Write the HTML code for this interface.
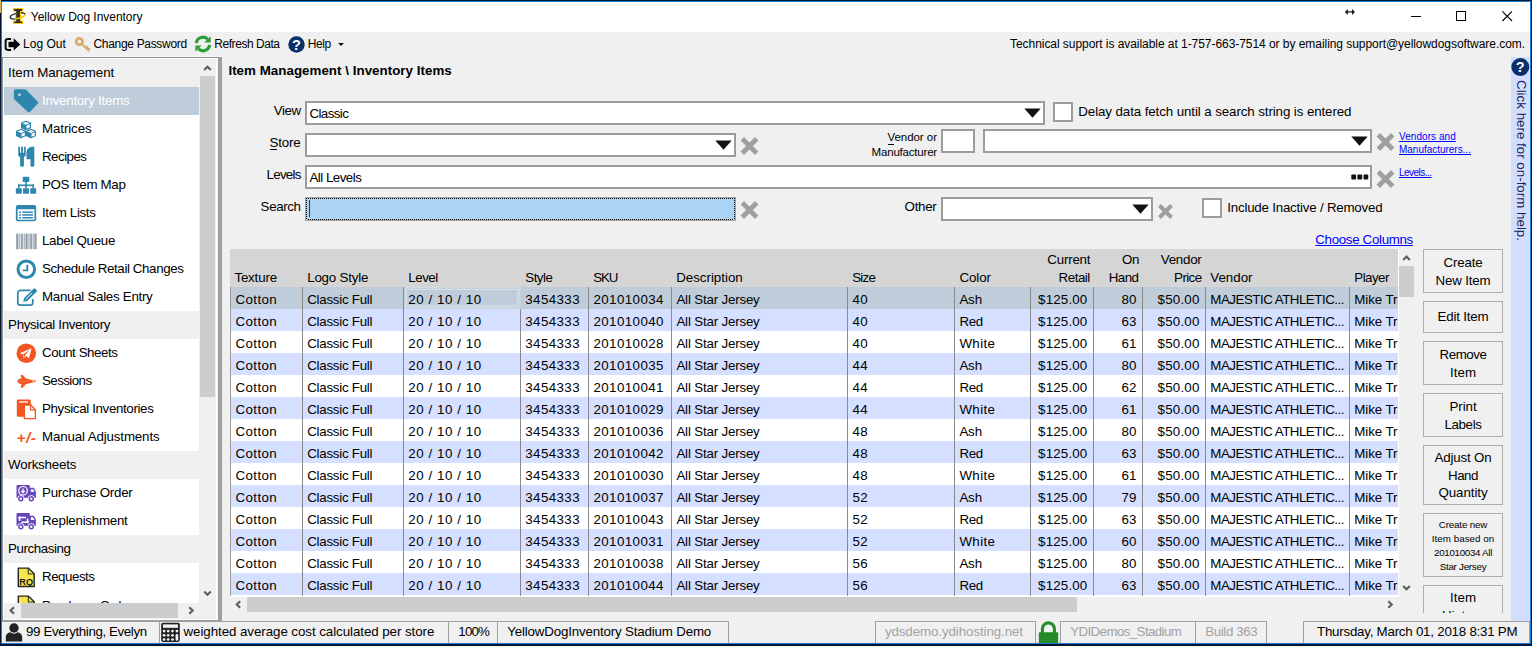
<!DOCTYPE html>
<html lang="en"><head><meta charset="utf-8"><title>Yellow Dog Inventory</title>
<style>
html,body{margin:0;padding:0;}
body{width:1532px;height:646px;position:relative;overflow:hidden;background:#03122e;font-family:"Liberation Sans",sans-serif;}
.b{position:absolute;box-sizing:content-box;display:block;}
.t{position:absolute;white-space:pre;line-height:1;font-family:"Liberation Sans",sans-serif;}
</style></head><body>
<div class="b" style="left:0px;top:0px;width:1532px;height:646px;background:#03122e;"></div>
<div class="b" style="left:1px;top:1px;width:1530px;height:643px;background:#1a84d8;"></div>
<div class="b" style="left:0px;top:0px;width:1px;height:13px;background:#d9b45a;"></div>
<div class="b" style="left:2px;top:2px;width:1528px;height:641px;background:#f0f0f0;"></div>
<div class="b" style="left:2px;top:2px;width:1528px;height:30px;background:#fff;"></div>
<span class="t" id="t0" style="top:10.94px;font-size:12px;color:#000;left:30.80px;letter-spacing:-0.035px;">Yellow Dog Inventory</span>
<svg class="b" style="left:7px;top:7px" width="20" height="18" viewBox="7 7 20 18">
<path d="M13 8h10.200v3.400h-2.200v9.300h2.200v3.200H13v-3.200h2.200v-9.300H13z" fill="#f7c600"/>
<path d="M14.200 9.100H22v1.800h-2v10.500h2v1.500h-7.800v-1.500h2V10.900h-2z" fill="#333"/>
<path d="M15.800 13.700c-3.600.9-5.900 2.300-5.600 3.700.2 1.300 2.600 1.800 5.300 1.500" fill="none" stroke="#2a2a2a" stroke-width="1.300"/>
<path d="M15 18.900c4.500-.5 9.300-2.200 10.300-4.500" fill="none" stroke="#f7c600" stroke-width="1.400"/>
<path d="M21 12.600c2.300.2 3.900.9 4.300 1.700" fill="none" stroke="#2a2a2a" stroke-width="1.200"/>
<circle cx="22.300" cy="12.700" r="0.700" fill="#2a2a2a"/>
</svg>
<svg class="b" style="left:1340px;top:4px" width="190" height="24" viewBox="0 0 190 24">
<g stroke="#000" stroke-width="1" fill="none" shape-rendering="crispEdges">
<path d="M71 12.500h10"/>
<rect x="116.500" y="7.500" width="9" height="9"/>
</g>
<path d="M162.400 7.400l9.600 9.600M172 7.400l-9.600 9.600" stroke="#000" stroke-width="1.100" fill="none"/>
<path d="M4.800 7.900L7.800 4.900v2.300h4.200V4.900l3 3-3 3V8.600H7.800v2.300z" fill="#1c1c1c"/>
</svg>
<span class="t" id="t1" style="top:38.14px;font-size:12px;color:#000;left:23.00px;letter-spacing:0.014px;">Log Out</span>
<span class="t" id="t2" style="top:38.14px;font-size:12px;color:#000;left:93.50px;letter-spacing:-0.318px;">Change Password</span>
<span class="t" id="t3" style="top:38.14px;font-size:12px;color:#000;left:214.30px;letter-spacing:-0.450px;">Refresh Data</span>
<span class="t" id="t4" style="top:38.14px;font-size:12px;color:#000;left:307.80px;letter-spacing:-0.397px;">Help</span>
<span class="t" id="t5" style="top:38.14px;font-size:12px;color:#000;left:1010.00px;letter-spacing:-0.051px;">Technical support is available at 1-757-663-7514 or by emailing support@yellowdogsoftware.com.</span>
<svg class="b" style="left:4px;top:36px" width="17" height="16" viewBox="0 0 17 16">
<path d="M7.100 2.900H3.900C2.500 2.900 1.600 3.800 1.600 5.200v6.400c0 1.400.9 2.300 2.300 2.300h3.200" fill="none" stroke="#0a0a0a" stroke-width="2"/>
<path d="M4.500 5.800h5.200V2.200l6.500 6.200-6.500 6.200v-3.300H4.500z" fill="#050505"/>
</svg>
<svg class="b" style="left:74px;top:36px" width="18" height="17" viewBox="0 0 18 17">
<circle cx="5.300" cy="5.500" r="3.200" fill="none" stroke="#d6ab6b" stroke-width="2.700"/>
<path d="M7.600 8l7.600 6.900M12 12.200l1.900-1.900M14.100 14.100l1.800-1.800" stroke="#d6ab6b" stroke-width="2.200" fill="none"/>
</svg>
<svg class="b" style="left:194px;top:35px" width="18" height="18" viewBox="0 0 18 18">
<path d="M2.300 8.200A6.700 6.700 0 0 1 13.600 4.100" fill="none" stroke="#2c9f3b" stroke-width="3.100"/>
<path d="M16.600 1.200v6.300h-6.300z" fill="#2c9f3b"/>
<path d="M15.700 9.800A6.700 6.700 0 0 1 4.400 13.900" fill="none" stroke="#2c9f3b" stroke-width="3.100"/>
<path d="M1.400 16.800v-6.300h6.300z" fill="#2c9f3b"/>
</svg>
<svg class="b" style="left:288px;top:36px" width="17" height="17" viewBox="0 0 17 17">
<circle cx="8.500" cy="8.500" r="8.200" fill="#0b2f6b"/>
<text x="8.500" y="13.700" font-family="Liberation Sans,sans-serif" font-weight="bold" font-size="14.500" fill="#fff" text-anchor="middle">?</text>
</svg>
<div class="b" style="left:338px;top:43px;border:3px solid transparent;border-top:3px solid #111;border-bottom:0;width:0;height:0"></div>
<div class="b" style="left:2px;top:56px;width:220px;height:1px;background:#f8f8f8;"></div>
<div class="b" style="left:2px;top:57px;width:220px;height:563px;background:#8c9199;"></div>
<div class="b" style="left:3px;top:58px;width:214px;height:562px;background:#fff;"></div>
<div class="b" style="left:218px;top:57px;width:4px;height:564px;background:#a0a0a0;"></div>
<div class="b" style="left:217px;top:58px;width:1px;height:562px;background:#f0f0f0;"></div>
<div class="b" style="left:4px;top:59px;width:195px;height:544px;overflow:hidden">
<div class="b" style="left:0;top:0px;width:195px;height:28px;background:#f0f0f0"></div>
<div class="b" style="left:0;top:28px;width:195px;height:28px;background:#bfcddb"></div>
<div class="b" style="left:0;top:28px;width:195px;height:28px"><svg class="b" style="left:9px;top:2px" width="26" height="25" viewBox="0 0 26 25"><path d="M.9 2.300C.9 1.100 1.700.2 2.900.2h8.300c.8 0 1.500.3 2.100.9l11.300 11.300c.7.700.7 1.700 0 2.400l-7.500 8c-.7.700-1.700.700-2.400 0L2 11.100C1.300 10.400.9 9.700.9 8.900z" fill="#2d86ae"/><rect x="5.200" y="4.400" width="2.600" height="2.600" rx="0.700" fill="#c4d4e2"/></svg></div>
<div class="b" style="left:0;top:56px;width:195px;height:28px"><svg class="b" style="left:11px;top:5px" width="22" height="19" viewBox="0 0 22 19"><g fill="#2d86ae" stroke="#2d86ae" stroke-width="1.200" stroke-linejoin="round"><path d="M11 1.200l4.400 1.900v4.600L11 9.600 6.600 7.700V3.100z"/><path d="M6 9.300l4.400 1.900v4.600L6 17.700l-4.400-1.900v-4.600z"/><path d="M16 9.300l4.400 1.900v4.600L16 17.700l-4.400-1.900v-4.600z"/></g><g fill="#fff"><path d="M7.400 3.300L11 1.900l3.600 1.400L11 4.800z"/><path d="M11.500 5.700l3.300-1.400v3L11.500 8.700z"/><path d="M2.400 11.400L6 10l3.600 1.400L6 12.900z"/><path d="M6.500 13.800l3.300-1.400v3l-3.300 1.400z"/><path d="M12.400 11.400L16 10l3.600 1.400-3.600 1.500z"/><path d="M16.500 13.800l3.300-1.400v3l-3.300 1.400z"/></g></svg></div>
<div class="b" style="left:0;top:84px;width:195px;height:28px"><svg class="b" style="left:13px;top:3px" width="18" height="22" viewBox="0 0 18 22"><path d="M1.200 .8h1.700v6h1.200v-6h1.800v6h1.200v-6h1.700v7.600c0 1.400-.8 2.300-1.900 2.700v8.300c0 .9-.8 1.400-1.900 1.400s-1.900-.5-1.900-1.400v-8.300c-1.100-.4-1.900-1.300-1.900-2.700z" fill="#2d86ae"/><path d="M17.300 .8v18.600c0 .9-.8 1.400-1.900 1.400s-1.900-.5-1.900-1.400v-6.200h-4V6.800c0-3.500 2.500-6 6-6z" fill="#2d86ae"/></svg></div>
<div class="b" style="left:0;top:112px;width:195px;height:28px"><svg class="b" style="left:11px;top:5px" width="22" height="19" viewBox="0 0 22 19"><g fill="#2d86ae"><rect x="7.700" y="0.800" width="6.600" height="5.200" rx="0.800"/><rect x="0.800" y="12.300" width="6" height="5.400" rx="0.800"/><rect x="8" y="12.300" width="6" height="5.400" rx="0.800"/><rect x="15.200" y="12.300" width="6" height="5.400" rx="0.800"/><rect x="10.200" y="5.500" width="1.600" height="7"/><rect x="3" y="8.500" width="16" height="1.600"/><rect x="3" y="8.500" width="1.600" height="4"/><rect x="17.400" y="8.500" width="1.600" height="4"/></g></svg></div>
<div class="b" style="left:0;top:140px;width:195px;height:28px"><svg class="b" style="left:11px;top:5px" width="22" height="18" viewBox="0 0 22 18"><rect x="1.700" y="1.900" width="18.600" height="14.600" rx="1.300" fill="#fff" stroke="#2d86ae" stroke-width="1.700"/><rect x="1.700" y="1.900" width="18.600" height="3.400" fill="#2d86ae"/><g fill="#2d86ae"><rect x="4.200" y="7.400" width="1.800" height="1.500"/><rect x="7.300" y="7.400" width="10.600" height="1.500"/><rect x="4.200" y="10.200" width="1.800" height="1.500"/><rect x="7.300" y="10.200" width="10.600" height="1.500"/><rect x="4.200" y="13" width="1.800" height="1.500"/><rect x="7.300" y="13" width="10.600" height="1.500"/></g></svg></div>
<div class="b" style="left:0;top:168px;width:195px;height:28px"><svg class="b" style="left:12px;top:6px" width="21" height="17" viewBox="0 0 21 17"><g fill="#8d9aa6"><rect x="0.200" y="0.600" width="2.200" height="15.600"/><rect x="3.300" y="0.600" width="1" height="15.600"/><rect x="5.100" y="0.600" width="1.700" height="15.600"/><rect x="7.700" y="0.600" width="1" height="15.600"/><rect x="9.500" y="0.600" width="2.200" height="15.600"/><rect x="12.500" y="0.600" width="1" height="15.600"/><rect x="14.200" y="0.600" width="1.700" height="15.600"/><rect x="16.700" y="0.600" width="1" height="15.600"/><rect x="18.400" y="0.600" width="2.200" height="15.600"/></g></svg></div>
<div class="b" style="left:0;top:196px;width:195px;height:28px"><svg class="b" style="left:12px;top:4px" width="21" height="21" viewBox="0 0 21 21"><circle cx="10.300" cy="10.300" r="8.300" fill="#fff" stroke="#2d86ae" stroke-width="3"/><path d="M11.300 5.800v5.600H6.800" fill="none" stroke="#2d86ae" stroke-width="1.900"/></svg></div>
<div class="b" style="left:0;top:224px;width:195px;height:28px"><svg class="b" style="left:12px;top:5px" width="22" height="19" viewBox="0 0 22 19"><path d="M14.500 2.300H4.600C3 2.300 1.800 3.400 1.800 5v9.400c0 1.600 1.200 2.700 2.800 2.700h9.400c1.600 0 2.800-1.100 2.800-2.700v-3.500" fill="none" stroke="#2d86ae" stroke-width="1.700"/><path d="M7.200 13.800l.9-3.700 9.500-9.300c.5-.5 1.200-.5 1.700 0l1.300 1.300c.5.500.5 1.200 0 1.700l-9.500 9.300z" fill="#2d86ae"/><path d="M9.600 11.300l6.400-6.300" stroke="#fff" stroke-width="0.900"/></svg></div>
<div class="b" style="left:0;top:252px;width:195px;height:28px;background:#f0f0f0"></div>
<div class="b" style="left:0;top:280px;width:195px;height:28px"><svg class="b" style="left:12px;top:4px" width="21" height="21" viewBox="0 0 21 21"><circle cx="10.300" cy="10.200" r="9.800" fill="#f2551f"/><path d="M15.600 5.300L3.800 10.200l3.300 1.200.6 4.200 2.400-2.600 2.900 2.200z" fill="#fff"/><path d="M7.100 11.400l6.600-4.600-4.800 5.600-.4 2.600" fill="#f2551f"/></svg></div>
<div class="b" style="left:0;top:308px;width:195px;height:28px"><svg class="b" style="left:12px;top:7px" width="21" height="15" viewBox="0 0 21 15"><path d="M20.200 7.300l-1.700-1-3.700-.6L10 4.600 6.600.9H4.500l1.100 3.500-2.200.4L.8 7.300l2.600 2.500 2.200.4-1.100 3.500h2.100L10 10l4.800-1.100 3.700-.6z" fill="#f2551f"/><ellipse cx="17.300" cy="7.300" rx="0.900" ry="0.700" fill="#fff"/><path d="M3.500 7.300h10" stroke="#f58a68" stroke-width="0.700"/></svg></div>
<div class="b" style="left:0;top:336px;width:195px;height:28px"><svg class="b" style="left:12px;top:4px" width="21" height="21" viewBox="0 0 21 21"><rect x="0.800" y="0.500" width="13.900" height="17.300" rx="1.300" fill="#f2551f"/><rect x="3.100" y="2.300" width="8.700" height="1.300" fill="#fff"/><path d="M8.400 6h6.300l4.700 4.700v8.900H8.400z" fill="#fff" stroke="#f2551f" stroke-width="1.300"/><path d="M14.500 6.300v4.600h4.600" fill="none" stroke="#f2551f" stroke-width="1.200"/></svg></div>
<div class="b" style="left:0;top:364px;width:195px;height:28px"><span class="t" style="left:12.500px;top:6.800px;font-size:15.500px;font-weight:bold;font-style:italic;color:#f2551f;letter-spacing:0.400px">+/-</span></div>
<div class="b" style="left:0;top:392px;width:195px;height:28px;background:#f0f0f0"></div>
<div class="b" style="left:0;top:420px;width:195px;height:28px"><svg class="b" style="left:12px;top:5px" width="21" height="18" viewBox="0 0 21 18"><path d="M1.700 1h11c.7 0 1.100.4 1.100 1.100v1.600h3.400c.5 0 .9.200 1.100.7l1.400 2.800c.2.300.2.600.2 1v5.500H.5V2.100C.5 1.400 1 1 1.700 1z" fill="#6647bb"/><path d="M14.900 5.200h2.300l1.300 2.700h-3.600z" fill="#fff"/><circle cx="4.800" cy="14.700" r="3.400" fill="#fff"/><circle cx="15.300" cy="14.700" r="3.400" fill="#fff"/><circle cx="4.800" cy="14.700" r="2.700" fill="#6647bb"/><circle cx="15.300" cy="14.700" r="2.700" fill="#6647bb"/><circle cx="4.800" cy="14.700" r="1.200" fill="#fff"/><circle cx="15.300" cy="14.700" r="1.200" fill="#fff"/><circle cx="7" cy="6.800" r="4.300" fill="none" stroke="#fff" stroke-width="1.200"/><path d="M7 4.400v3.600M5.300 6.800L7 8.700l1.700-1.900" stroke="#fff" stroke-width="1.300" fill="none"/></svg></div>
<div class="b" style="left:0;top:448px;width:195px;height:28px"><svg class="b" style="left:12px;top:5px" width="21" height="18" viewBox="0 0 21 18"><path d="M1.700 1h11c.7 0 1.100.4 1.100 1.100v1.600h3.400c.5 0 .9.200 1.100.7l1.400 2.800c.2.300.2.600.2 1v5.500H.5V2.100C.5 1.400 1 1 1.700 1z" fill="#6647bb"/><path d="M14.900 5.200h2.300l1.300 2.700h-3.600z" fill="#fff"/><circle cx="4.800" cy="14.700" r="3.400" fill="#fff"/><circle cx="15.300" cy="14.700" r="3.400" fill="#fff"/><circle cx="4.800" cy="14.700" r="2.700" fill="#6647bb"/><circle cx="15.300" cy="14.700" r="2.700" fill="#6647bb"/><circle cx="4.800" cy="14.700" r="1.200" fill="#fff"/><circle cx="15.300" cy="14.700" r="1.200" fill="#fff"/><path d="M3.600 9V5.400h6.400M5.400 10.300h6.200V6.600" stroke="#fff" stroke-width="1.500" fill="none"/><path d="M1.700 6.300l1.900-2.400 1.900 2.400zM9.700 9.300l1.900 2.400 1.900-2.400z" fill="#fff"/></svg></div>
<div class="b" style="left:0;top:476px;width:195px;height:28px;background:#f0f0f0"></div>
<div class="b" style="left:0;top:504px;width:195px;height:28px"><svg class="b" style="left:13px;top:4px" width="19" height="21" viewBox="0 0 19 21"><path d="M1.300 1.100h10.200l5.700 5.700v12.700H1.300z" fill="#f5e64f" stroke="#26261c" stroke-width="1.400"/><path d="M11.300 1.300v5.700h5.700" fill="none" stroke="#3a3a2a" stroke-width="1.200"/><text x="9.200" y="17.600" font-family="Liberation Sans,sans-serif" font-weight="bold" font-size="9.200" text-anchor="middle" fill="#1a1a1a">RQ</text></svg></div>
<div class="b" style="left:0;top:532px;width:195px;height:28px"><svg class="b" style="left:13px;top:4px" width="19" height="21" viewBox="0 0 19 21"><path d="M1.300 1.100h10.200l5.700 5.700v12.700H1.300z" fill="#f5e64f" stroke="#26261c" stroke-width="1.400"/><path d="M11.300 1.300v5.700h5.700" fill="none" stroke="#3a3a2a" stroke-width="1.200"/><text x="9.200" y="17.600" font-family="Liberation Sans,sans-serif" font-weight="bold" font-size="9.200" text-anchor="middle" fill="#1a1a1a">PO</text></svg></div>
</div>
<div class="b" style="left:4px;top:59px;width:195px;height:544px;overflow:hidden"><div class="b" style="left:-4px;top:-59px;width:300px;height:700px">
<span class="t" id="t6" style="top:66.12px;font-size:13.33px;color:#000;left:8.10px;letter-spacing:-0.095px;">Item Management</span>
<span class="t" id="t7" style="top:94.12px;font-size:13.33px;color:#fff;left:42.00px;letter-spacing:-0.242px;">Inventory Items</span>
<span class="t" id="t8" style="top:122.12px;font-size:13.33px;color:#000;left:42.00px;letter-spacing:-0.107px;">Matrices</span>
<span class="t" id="t9" style="top:150.12px;font-size:13.33px;color:#000;left:42.00px;letter-spacing:-0.522px;">Recipes</span>
<span class="t" id="t10" style="top:178.12px;font-size:13.33px;color:#000;left:42.00px;letter-spacing:-0.326px;">POS Item Map</span>
<span class="t" id="t11" style="top:206.12px;font-size:13.33px;color:#000;left:42.00px;letter-spacing:-0.353px;">Item Lists</span>
<span class="t" id="t12" style="top:234.12px;font-size:13.33px;color:#000;left:42.00px;letter-spacing:-0.304px;">Label Queue</span>
<span class="t" id="t13" style="top:262.12px;font-size:13.33px;color:#000;left:42.00px;letter-spacing:-0.388px;">Schedule Retail Changes</span>
<span class="t" id="t14" style="top:290.12px;font-size:13.33px;color:#000;left:42.00px;letter-spacing:-0.282px;">Manual Sales Entry</span>
<span class="t" id="t15" style="top:318.12px;font-size:13.33px;color:#000;left:8.10px;letter-spacing:-0.342px;">Physical Inventory</span>
<span class="t" id="t16" style="top:346.12px;font-size:13.33px;color:#000;left:42.00px;letter-spacing:-0.439px;">Count Sheets</span>
<span class="t" id="t17" style="top:374.12px;font-size:13.33px;color:#000;left:42.00px;letter-spacing:-0.574px;">Sessions</span>
<span class="t" id="t18" style="top:402.12px;font-size:13.33px;color:#000;left:42.00px;letter-spacing:-0.352px;">Physical Inventories</span>
<span class="t" id="t19" style="top:430.12px;font-size:13.33px;color:#000;left:42.00px;letter-spacing:-0.141px;">Manual Adjustments</span>
<span class="t" id="t20" style="top:458.12px;font-size:13.33px;color:#000;left:8.10px;letter-spacing:-0.212px;">Worksheets</span>
<span class="t" id="t21" style="top:486.12px;font-size:13.33px;color:#000;left:42.00px;letter-spacing:-0.256px;">Purchase Order</span>
<span class="t" id="t22" style="top:514.12px;font-size:13.33px;color:#000;left:42.00px;letter-spacing:-0.262px;">Replenishment</span>
<span class="t" id="t23" style="top:542.12px;font-size:13.33px;color:#000;left:8.10px;letter-spacing:-0.419px;">Purchasing</span>
<span class="t" id="t24" style="top:570.12px;font-size:13.33px;color:#000;left:42.00px;letter-spacing:-0.477px;">Requests</span>
<span class="t" id="t25" style="top:599.32px;font-size:13.33px;color:#000;left:42.00px;letter-spacing:-0.250px;">Purchase Orders</span>
</div></div>
<div class="b" style="left:199px;top:59px;width:17px;height:543px;background:#f0f0f0;"></div>
<div class="b" style="left:200px;top:76px;width:15px;height:321px;background:#cdcdcd;"></div>
<svg class="b" style="left:199px;top:59px" width="17" height="17" viewBox="0 0 17 17"><path d="M5.200 11l3.300-3.300 3.300 3.300" fill="none" stroke="#5c5c5c" stroke-width="2.100"/></svg>
<svg class="b" style="left:199px;top:585px" width="17" height="17" viewBox="0 0 17 17"><path d="M5.200 6.400l3.300 3.300 3.300-3.300" fill="none" stroke="#5c5c5c" stroke-width="2.100"/></svg>
<div class="b" style="left:4px;top:603px;width:212px;height:16px;background:#f0f0f0;"></div>
<div class="b" style="left:199px;top:602px;width:17px;height:1px;background:#f0f0f0;"></div>
<div class="b" style="left:21px;top:603px;width:157px;height:15px;background:#cdcdcd;"></div>
<svg class="b" style="left:4px;top:602px" width="17" height="17" viewBox="0 0 17 17"><path d="M10 5.300l-3.400 3.200 3.400 3.200" fill="none" stroke="#5c5c5c" stroke-width="2.100"/></svg>
<svg class="b" style="left:182px;top:602px" width="17" height="17" viewBox="0 0 17 17"><path d="M7.300 5.300l3.400 3.200-3.400 3.200" fill="none" stroke="#5c5c5c" stroke-width="2.100"/></svg>
<span class="t" id="t26" style="top:63.72px;font-size:13.33px;color:#000;font-weight:bold;left:228.40px;letter-spacing:0.036px;">Item Management \ Inventory Items</span>
<span class="t" id="t27" style="top:103.62px;font-size:13.33px;color:#000;right:1231.20px;letter-spacing:-0.414px;">View</span>
<span class="t" id="t28" style="top:136.12px;font-size:13.33px;color:#000;right:1231.40px;letter-spacing:-0.172px;">Store</span>
<div class="b" style="left:270px;top:148.5px;width:7px;height:1px;background:#000;"></div>
<span class="t" id="t29" style="top:167.62px;font-size:13.33px;color:#000;right:1231.40px;letter-spacing:-0.755px;">Levels</span>
<span class="t" id="t30" style="top:199.52px;font-size:13.33px;color:#000;right:1231.40px;letter-spacing:-0.372px;">Search</span>
<div class="b" style="left:305px;top:101px;width:736px;height:20px;background:#fff;border:2px solid #9c9c9c;"></div>
<span class="t" id="t31" style="top:106.72px;font-size:13.33px;color:#000;left:309.40px;letter-spacing:-0.579px;">Classic</span>
<svg class="b" style="left:1024px;top:108px" width="17" height="10" viewBox="0 0 17 10"><path d="M0.300 0.500h16.400L8.500 9.800z" fill="#111"/></svg>
<div class="b" style="left:305px;top:133px;width:427px;height:20px;background:#fff;border:2px solid #9c9c9c;"></div>
<svg class="b" style="left:715px;top:140px" width="17" height="10" viewBox="0 0 17 10"><path d="M0.300 0.500h16.400L8.500 9.800z" fill="#111"/></svg>
<svg class="b" style="left:740px;top:137px" width="19" height="18" viewBox="0 0 19 18"><path d="M2.300 1.800l14.400 14.400M16.700 1.800L2.300 16.200" stroke="#9f9f9f" stroke-width="4.800" fill="none"/></svg>
<div class="b" style="left:305px;top:165px;width:1063px;height:20px;background:#fff;border:2px solid #9c9c9c;"></div>
<span class="t" id="t32" style="top:170.72px;font-size:13.33px;color:#000;left:309.40px;letter-spacing:-0.505px;">All Levels</span>
<svg class="b" style="left:1351px;top:174px" width="18" height="6" viewBox="0 0 18 6"><rect x="0.300" y="0.500" width="4.800" height="5" rx="1" fill="#111"/><rect x="6.400" y="0.500" width="4.800" height="5" rx="1" fill="#111"/><rect x="12.500" y="0.500" width="4.800" height="5" rx="1" fill="#111"/></svg>
<svg class="b" style="left:1376px;top:170px" width="19" height="18" viewBox="0 0 19 18"><path d="M2.300 1.800l14.400 14.400M16.700 1.800L2.300 16.200" stroke="#9f9f9f" stroke-width="4.800" fill="none"/></svg>
<div class="b" style="left:305px;top:197px;width:431px;height:24px;background:#a3a3a3;"></div>
<div class="b" style="left:306px;top:198px;width:429px;height:22px;background:#abd3f3;"></div>
<div class="b" style="left:306px;top:198px;width:429px;height:1px;background:repeating-linear-gradient(90deg,#000 0 1px,#abd3f3 1px 2px)"></div>
<div class="b" style="left:306px;top:219px;width:429px;height:1px;background:repeating-linear-gradient(90deg,#000 0 1px,#abd3f3 1px 2px)"></div>
<div class="b" style="left:306px;top:198px;width:1px;height:22px;background:repeating-linear-gradient(180deg,#000 0 1px,#abd3f3 1px 2px)"></div>
<div class="b" style="left:734px;top:198px;width:1px;height:22px;background:repeating-linear-gradient(180deg,#000 0 1px,#abd3f3 1px 2px)"></div>
<div class="b" style="left:309px;top:200px;width:1px;height:17px;background:#5b2e0f;"></div>
<svg class="b" style="left:740px;top:201px" width="19" height="18" viewBox="0 0 19 18"><path d="M2.300 1.800l14.400 14.400M16.700 1.800L2.300 16.200" stroke="#9f9f9f" stroke-width="4.800" fill="none"/></svg>
<div class="b" style="left:1053px;top:102px;width:16px;height:16px;background:#fff;border:2px solid #9c9c9c;"></div>
<span class="t" id="t33" style="top:104.52px;font-size:13.33px;color:#000;left:1078.30px;letter-spacing:-0.096px;">Delay data fetch until a search string is entered</span>
<span class="t" id="t34" style="top:132.47px;font-size:11.5px;color:#000;right:595.00px;letter-spacing:-0.031px;">Vendor or</span>
<div class="b" style="left:887.5px;top:143.5px;width:6.5px;height:1px;background:#000;"></div>
<span class="t" id="t35" style="top:147.07px;font-size:11.5px;color:#000;right:595.00px;letter-spacing:-0.197px;">Manufacturer</span>
<div class="b" style="left:941px;top:129px;width:30px;height:20px;background:#fff;border:2px solid #9c9c9c;"></div>
<div class="b" style="left:983px;top:129px;width:385px;height:20px;background:#fff;border:2px solid #9c9c9c;"></div>
<svg class="b" style="left:1351px;top:136px" width="17" height="10" viewBox="0 0 17 10"><path d="M0.300 0.500h16.400L8.500 9.800z" fill="#111"/></svg>
<svg class="b" style="left:1376px;top:133px" width="19" height="18" viewBox="0 0 19 18"><path d="M2.300 1.800l14.400 14.400M16.700 1.800L2.300 16.200" stroke="#9f9f9f" stroke-width="4.800" fill="none"/></svg>
<span class="t" id="t36" style="top:132.23px;font-size:10px;color:#0000ff;left:1399.00px;letter-spacing:0.057px;text-decoration:underline;">Vendors and</span>
<span class="t" id="t37" style="top:145.23px;font-size:10px;color:#0000ff;left:1399.00px;letter-spacing:-0.023px;text-decoration:underline;">Manufacturers...</span>
<span class="t" id="t38" style="top:168.44px;font-size:10px;color:#0000ff;left:1399.00px;letter-spacing:-0.528px;text-decoration:underline;">Levels...</span>
<span class="t" id="t39" style="top:199.72px;font-size:13.33px;color:#000;right:595.60px;letter-spacing:-0.309px;">Other</span>
<div class="b" style="left:941px;top:197px;width:208px;height:20px;background:#fff;border:2px solid #9c9c9c;"></div>
<svg class="b" style="left:1132px;top:204px" width="17" height="10" viewBox="0 0 17 10"><path d="M0.300 0.500h16.400L8.500 9.800z" fill="#111"/></svg>
<svg class="b" style="left:1157px;top:204px" width="17" height="15" viewBox="0 0 19 18"><path d="M2.300 1.800l14.400 14.400M16.700 1.800L2.300 16.200" stroke="#9f9f9f" stroke-width="4.800" fill="none"/></svg>
<div class="b" style="left:1202px;top:198px;width:16px;height:16px;background:#fff;border:2px solid #9c9c9c;"></div>
<span class="t" id="t40" style="top:200.92px;font-size:13.33px;color:#000;left:1227.30px;letter-spacing:-0.218px;">Include Inactive / Removed</span>
<span class="t" id="t41" style="top:233.32px;font-size:13.33px;color:#0000ff;left:1315.30px;letter-spacing:-0.331px;text-decoration:underline;">Choose Columns</span>
<div class="b" style="left:230px;top:249px;width:1168px;height:38px;background:#d5d5d5;"></div>
<div class="b" style="left:230px;top:287px;width:1169px;height:310px;background:#fff;"></div>
<span class="t" id="t42" style="top:271.02px;font-size:13.33px;color:#000;left:234.40px;letter-spacing:-0.174px;">Texture</span>
<span class="t" id="t43" style="top:271.02px;font-size:13.33px;color:#000;left:307.20px;letter-spacing:-0.198px;">Logo Style</span>
<span class="t" id="t44" style="top:271.02px;font-size:13.33px;color:#000;left:408.30px;letter-spacing:-0.475px;">Level</span>
<span class="t" id="t45" style="top:271.02px;font-size:13.33px;color:#000;left:525.30px;letter-spacing:-0.528px;">Style</span>
<span class="t" id="t46" style="top:271.02px;font-size:13.33px;color:#000;left:593.20px;letter-spacing:-1.135px;">SKU</span>
<span class="t" id="t47" style="top:271.02px;font-size:13.33px;color:#000;left:676.20px;letter-spacing:-0.016px;">Description</span>
<span class="t" id="t48" style="top:271.02px;font-size:13.33px;color:#000;left:852.20px;letter-spacing:-0.734px;">Size</span>
<span class="t" id="t49" style="top:271.02px;font-size:13.33px;color:#000;left:959.40px;letter-spacing:-0.072px;">Color</span>
<span class="t" id="t50" style="top:252.92px;font-size:13.33px;color:#000;right:441.70px;letter-spacing:-0.208px;">Current</span>
<span class="t" id="t51" style="top:271.02px;font-size:13.33px;color:#000;right:442.20px;letter-spacing:-0.480px;">Retail</span>
<span class="t" id="t52" style="top:252.92px;font-size:13.33px;color:#000;right:393.00px;letter-spacing:-0.391px;">On</span>
<span class="t" id="t53" style="top:271.02px;font-size:13.33px;color:#000;right:393.50px;letter-spacing:-0.519px;">Hand</span>
<span class="t" id="t54" style="top:252.92px;font-size:13.33px;color:#000;right:330.50px;letter-spacing:-0.258px;">Vendor</span>
<span class="t" id="t55" style="top:271.02px;font-size:13.33px;color:#000;right:330.50px;letter-spacing:-0.595px;">Price</span>
<span class="t" id="t56" style="top:271.02px;font-size:13.33px;color:#000;left:1210.30px;letter-spacing:-0.008px;">Vendor</span>
<span class="t" id="t57" style="top:271.02px;font-size:13.33px;color:#000;left:1354.30px;letter-spacing:-0.547px;">Player</span>
<div class="b" style="left:230px;top:287px;width:1168px;height:22px;background:#bfcddb;"></div>
<div class="b" style="left:230px;top:309px;width:1168px;height:22px;background:#d5dfff;"></div>
<div class="b" style="left:230px;top:353px;width:1168px;height:22px;background:#d5dfff;"></div>
<div class="b" style="left:230px;top:397px;width:1168px;height:22px;background:#d5dfff;"></div>
<div class="b" style="left:230px;top:441px;width:1168px;height:22px;background:#d5dfff;"></div>
<div class="b" style="left:230px;top:485px;width:1168px;height:22px;background:#d5dfff;"></div>
<div class="b" style="left:230px;top:529px;width:1168px;height:22px;background:#d5dfff;"></div>
<div class="b" style="left:230px;top:573px;width:1168px;height:22px;background:#d5dfff;"></div>
<div class="b" style="left:230px;top:287px;width:1px;height:309px;background:#9a9a9a;"></div>
<div class="b" style="left:302.0px;top:287px;width:1px;height:309px;background:#8a8a8a;"></div>
<div class="b" style="left:403.0px;top:287px;width:1px;height:309px;background:#8a8a8a;"></div>
<div class="b" style="left:520.0px;top:287px;width:1px;height:309px;background:#8a8a8a;"></div>
<div class="b" style="left:588.0px;top:287px;width:1px;height:309px;background:#8a8a8a;"></div>
<div class="b" style="left:671.0px;top:287px;width:1px;height:309px;background:#8a8a8a;"></div>
<div class="b" style="left:847.0px;top:287px;width:1px;height:309px;background:#8a8a8a;"></div>
<div class="b" style="left:954.0px;top:287px;width:1px;height:309px;background:#8a8a8a;"></div>
<div class="b" style="left:1030.0px;top:287px;width:1px;height:309px;background:#8a8a8a;"></div>
<div class="b" style="left:1093.0px;top:287px;width:1px;height:309px;background:#8a8a8a;"></div>
<div class="b" style="left:1142.0px;top:287px;width:1px;height:309px;background:#8a8a8a;"></div>
<div class="b" style="left:1205.0px;top:287px;width:1px;height:309px;background:#8a8a8a;"></div>
<div class="b" style="left:1349.0px;top:287px;width:1px;height:309px;background:#8a8a8a;"></div>
<div class="b" style="left:404px;top:287px;width:117px;height:22px;background:#c6d3df;"></div><div class="b" style="left:405px;top:287px;width:113px;height:19px;background:#c6d3df;border:1px solid #d2dce6;"></div><div class="b" style="left:406px;top:289px;width:110px;height:15px;background:#bfcddb;border:1px solid #d6e0e9;"></div>
<div class="b" style="left:230px;top:287px;width:1168px;height:308px;overflow:hidden"><div class="b" style="left:-230px;top:-287px;width:1532px;height:646px">
<span class="t" id="t58" style="top:292.62px;font-size:13.33px;color:#000;left:235.60px;letter-spacing:0.370px;">Cotton</span>
<span class="t" id="t59" style="top:292.62px;font-size:13.33px;color:#000;left:307.20px;letter-spacing:-0.262px;">Classic Full</span>
<span class="t" id="t60" style="top:292.62px;font-size:13.33px;color:#000;left:408.30px;letter-spacing:0.566px;">20 / 10 / 10</span>
<span class="t" id="t61" style="top:292.62px;font-size:13.33px;color:#000;left:525.30px;letter-spacing:0.401px;">3454333</span>
<span class="t" id="t62" style="top:292.62px;font-size:13.33px;color:#000;left:593.40px;letter-spacing:0.420px;">201010034</span>
<span class="t" id="t63" style="top:292.62px;font-size:13.33px;color:#000;left:676.40px;letter-spacing:-0.181px;">All Star Jersey</span>
<span class="t" id="t64" style="top:292.62px;font-size:13.33px;color:#000;left:852.40px;letter-spacing:0.336px;">40</span>
<span class="t" id="t65" style="top:292.62px;font-size:13.33px;color:#000;left:959.40px;letter-spacing:-0.156px;">Ash</span>
<span class="t" id="t66" style="top:292.62px;font-size:13.33px;color:#000;right:444.60px;letter-spacing:0.159px;">$125.00</span>
<span class="t" id="t67" style="top:292.62px;font-size:13.33px;color:#000;right:395.40px;letter-spacing:0.186px;">80</span>
<span class="t" id="t68" style="top:292.62px;font-size:13.33px;color:#000;right:332.40px;letter-spacing:0.206px;">$50.00</span>
<span class="t" id="t69" style="top:292.62px;font-size:13.33px;color:#000;left:1210.30px;letter-spacing:-0.491px;">MAJESTIC ATHLETIC...</span>
<span class="t" id="t70" style="top:292.62px;font-size:13.33px;color:#000;left:1354.30px;letter-spacing:-0.072px;">Mike Trout</span>
<span class="t" id="t71" style="top:314.62px;font-size:13.33px;color:#000;left:235.60px;letter-spacing:0.370px;">Cotton</span>
<span class="t" id="t72" style="top:314.62px;font-size:13.33px;color:#000;left:307.20px;letter-spacing:-0.262px;">Classic Full</span>
<span class="t" id="t73" style="top:314.62px;font-size:13.33px;color:#000;left:408.30px;letter-spacing:0.566px;">20 / 10 / 10</span>
<span class="t" id="t74" style="top:314.62px;font-size:13.33px;color:#000;left:525.30px;letter-spacing:0.401px;">3454333</span>
<span class="t" id="t75" style="top:314.62px;font-size:13.33px;color:#000;left:593.40px;letter-spacing:0.420px;">201010040</span>
<span class="t" id="t76" style="top:314.62px;font-size:13.33px;color:#000;left:676.40px;letter-spacing:-0.181px;">All Star Jersey</span>
<span class="t" id="t77" style="top:314.62px;font-size:13.33px;color:#000;left:852.40px;letter-spacing:0.336px;">40</span>
<span class="t" id="t78" style="top:314.62px;font-size:13.33px;color:#000;left:959.40px;letter-spacing:-0.318px;">Red</span>
<span class="t" id="t79" style="top:314.62px;font-size:13.33px;color:#000;right:444.60px;letter-spacing:0.159px;">$125.00</span>
<span class="t" id="t80" style="top:314.62px;font-size:13.33px;color:#000;right:395.40px;letter-spacing:0.186px;">63</span>
<span class="t" id="t81" style="top:314.62px;font-size:13.33px;color:#000;right:332.40px;letter-spacing:0.206px;">$50.00</span>
<span class="t" id="t82" style="top:314.62px;font-size:13.33px;color:#000;left:1210.30px;letter-spacing:-0.491px;">MAJESTIC ATHLETIC...</span>
<span class="t" id="t83" style="top:314.62px;font-size:13.33px;color:#000;left:1354.30px;letter-spacing:-0.072px;">Mike Trout</span>
<span class="t" id="t84" style="top:336.62px;font-size:13.33px;color:#000;left:235.60px;letter-spacing:0.370px;">Cotton</span>
<span class="t" id="t85" style="top:336.62px;font-size:13.33px;color:#000;left:307.20px;letter-spacing:-0.262px;">Classic Full</span>
<span class="t" id="t86" style="top:336.62px;font-size:13.33px;color:#000;left:408.30px;letter-spacing:0.566px;">20 / 10 / 10</span>
<span class="t" id="t87" style="top:336.62px;font-size:13.33px;color:#000;left:525.30px;letter-spacing:0.401px;">3454333</span>
<span class="t" id="t88" style="top:336.62px;font-size:13.33px;color:#000;left:593.40px;letter-spacing:0.420px;">201010028</span>
<span class="t" id="t89" style="top:336.62px;font-size:13.33px;color:#000;left:676.40px;letter-spacing:-0.181px;">All Star Jersey</span>
<span class="t" id="t90" style="top:336.62px;font-size:13.33px;color:#000;left:852.40px;letter-spacing:0.336px;">40</span>
<span class="t" id="t91" style="top:336.62px;font-size:13.33px;color:#000;left:959.40px;letter-spacing:0.384px;">White</span>
<span class="t" id="t92" style="top:336.62px;font-size:13.33px;color:#000;right:444.60px;letter-spacing:0.159px;">$125.00</span>
<span class="t" id="t93" style="top:336.62px;font-size:13.33px;color:#000;right:395.40px;letter-spacing:0.186px;">61</span>
<span class="t" id="t94" style="top:336.62px;font-size:13.33px;color:#000;right:332.40px;letter-spacing:0.206px;">$50.00</span>
<span class="t" id="t95" style="top:336.62px;font-size:13.33px;color:#000;left:1210.30px;letter-spacing:-0.491px;">MAJESTIC ATHLETIC...</span>
<span class="t" id="t96" style="top:336.62px;font-size:13.33px;color:#000;left:1354.30px;letter-spacing:-0.072px;">Mike Trout</span>
<span class="t" id="t97" style="top:358.62px;font-size:13.33px;color:#000;left:235.60px;letter-spacing:0.370px;">Cotton</span>
<span class="t" id="t98" style="top:358.62px;font-size:13.33px;color:#000;left:307.20px;letter-spacing:-0.262px;">Classic Full</span>
<span class="t" id="t99" style="top:358.62px;font-size:13.33px;color:#000;left:408.30px;letter-spacing:0.566px;">20 / 10 / 10</span>
<span class="t" id="t100" style="top:358.62px;font-size:13.33px;color:#000;left:525.30px;letter-spacing:0.401px;">3454333</span>
<span class="t" id="t101" style="top:358.62px;font-size:13.33px;color:#000;left:593.40px;letter-spacing:0.420px;">201010035</span>
<span class="t" id="t102" style="top:358.62px;font-size:13.33px;color:#000;left:676.40px;letter-spacing:-0.181px;">All Star Jersey</span>
<span class="t" id="t103" style="top:358.62px;font-size:13.33px;color:#000;left:852.40px;letter-spacing:0.336px;">44</span>
<span class="t" id="t104" style="top:358.62px;font-size:13.33px;color:#000;left:959.40px;letter-spacing:-0.156px;">Ash</span>
<span class="t" id="t105" style="top:358.62px;font-size:13.33px;color:#000;right:444.60px;letter-spacing:0.159px;">$125.00</span>
<span class="t" id="t106" style="top:358.62px;font-size:13.33px;color:#000;right:395.40px;letter-spacing:0.186px;">80</span>
<span class="t" id="t107" style="top:358.62px;font-size:13.33px;color:#000;right:332.40px;letter-spacing:0.206px;">$50.00</span>
<span class="t" id="t108" style="top:358.62px;font-size:13.33px;color:#000;left:1210.30px;letter-spacing:-0.491px;">MAJESTIC ATHLETIC...</span>
<span class="t" id="t109" style="top:358.62px;font-size:13.33px;color:#000;left:1354.30px;letter-spacing:-0.072px;">Mike Trout</span>
<span class="t" id="t110" style="top:380.62px;font-size:13.33px;color:#000;left:235.60px;letter-spacing:0.370px;">Cotton</span>
<span class="t" id="t111" style="top:380.62px;font-size:13.33px;color:#000;left:307.20px;letter-spacing:-0.262px;">Classic Full</span>
<span class="t" id="t112" style="top:380.62px;font-size:13.33px;color:#000;left:408.30px;letter-spacing:0.566px;">20 / 10 / 10</span>
<span class="t" id="t113" style="top:380.62px;font-size:13.33px;color:#000;left:525.30px;letter-spacing:0.401px;">3454333</span>
<span class="t" id="t114" style="top:380.62px;font-size:13.33px;color:#000;left:593.40px;letter-spacing:0.420px;">201010041</span>
<span class="t" id="t115" style="top:380.62px;font-size:13.33px;color:#000;left:676.40px;letter-spacing:-0.181px;">All Star Jersey</span>
<span class="t" id="t116" style="top:380.62px;font-size:13.33px;color:#000;left:852.40px;letter-spacing:0.336px;">44</span>
<span class="t" id="t117" style="top:380.62px;font-size:13.33px;color:#000;left:959.40px;letter-spacing:-0.318px;">Red</span>
<span class="t" id="t118" style="top:380.62px;font-size:13.33px;color:#000;right:444.60px;letter-spacing:0.159px;">$125.00</span>
<span class="t" id="t119" style="top:380.62px;font-size:13.33px;color:#000;right:395.40px;letter-spacing:0.186px;">62</span>
<span class="t" id="t120" style="top:380.62px;font-size:13.33px;color:#000;right:332.40px;letter-spacing:0.206px;">$50.00</span>
<span class="t" id="t121" style="top:380.62px;font-size:13.33px;color:#000;left:1210.30px;letter-spacing:-0.491px;">MAJESTIC ATHLETIC...</span>
<span class="t" id="t122" style="top:380.62px;font-size:13.33px;color:#000;left:1354.30px;letter-spacing:-0.072px;">Mike Trout</span>
<span class="t" id="t123" style="top:402.62px;font-size:13.33px;color:#000;left:235.60px;letter-spacing:0.370px;">Cotton</span>
<span class="t" id="t124" style="top:402.62px;font-size:13.33px;color:#000;left:307.20px;letter-spacing:-0.262px;">Classic Full</span>
<span class="t" id="t125" style="top:402.62px;font-size:13.33px;color:#000;left:408.30px;letter-spacing:0.566px;">20 / 10 / 10</span>
<span class="t" id="t126" style="top:402.62px;font-size:13.33px;color:#000;left:525.30px;letter-spacing:0.401px;">3454333</span>
<span class="t" id="t127" style="top:402.62px;font-size:13.33px;color:#000;left:593.40px;letter-spacing:0.420px;">201010029</span>
<span class="t" id="t128" style="top:402.62px;font-size:13.33px;color:#000;left:676.40px;letter-spacing:-0.181px;">All Star Jersey</span>
<span class="t" id="t129" style="top:402.62px;font-size:13.33px;color:#000;left:852.40px;letter-spacing:0.336px;">44</span>
<span class="t" id="t130" style="top:402.62px;font-size:13.33px;color:#000;left:959.40px;letter-spacing:0.384px;">White</span>
<span class="t" id="t131" style="top:402.62px;font-size:13.33px;color:#000;right:444.60px;letter-spacing:0.159px;">$125.00</span>
<span class="t" id="t132" style="top:402.62px;font-size:13.33px;color:#000;right:395.40px;letter-spacing:0.186px;">61</span>
<span class="t" id="t133" style="top:402.62px;font-size:13.33px;color:#000;right:332.40px;letter-spacing:0.206px;">$50.00</span>
<span class="t" id="t134" style="top:402.62px;font-size:13.33px;color:#000;left:1210.30px;letter-spacing:-0.491px;">MAJESTIC ATHLETIC...</span>
<span class="t" id="t135" style="top:402.62px;font-size:13.33px;color:#000;left:1354.30px;letter-spacing:-0.072px;">Mike Trout</span>
<span class="t" id="t136" style="top:424.62px;font-size:13.33px;color:#000;left:235.60px;letter-spacing:0.370px;">Cotton</span>
<span class="t" id="t137" style="top:424.62px;font-size:13.33px;color:#000;left:307.20px;letter-spacing:-0.262px;">Classic Full</span>
<span class="t" id="t138" style="top:424.62px;font-size:13.33px;color:#000;left:408.30px;letter-spacing:0.566px;">20 / 10 / 10</span>
<span class="t" id="t139" style="top:424.62px;font-size:13.33px;color:#000;left:525.30px;letter-spacing:0.401px;">3454333</span>
<span class="t" id="t140" style="top:424.62px;font-size:13.33px;color:#000;left:593.40px;letter-spacing:0.420px;">201010036</span>
<span class="t" id="t141" style="top:424.62px;font-size:13.33px;color:#000;left:676.40px;letter-spacing:-0.181px;">All Star Jersey</span>
<span class="t" id="t142" style="top:424.62px;font-size:13.33px;color:#000;left:852.40px;letter-spacing:0.336px;">48</span>
<span class="t" id="t143" style="top:424.62px;font-size:13.33px;color:#000;left:959.40px;letter-spacing:-0.156px;">Ash</span>
<span class="t" id="t144" style="top:424.62px;font-size:13.33px;color:#000;right:444.60px;letter-spacing:0.159px;">$125.00</span>
<span class="t" id="t145" style="top:424.62px;font-size:13.33px;color:#000;right:395.40px;letter-spacing:0.186px;">80</span>
<span class="t" id="t146" style="top:424.62px;font-size:13.33px;color:#000;right:332.40px;letter-spacing:0.206px;">$50.00</span>
<span class="t" id="t147" style="top:424.62px;font-size:13.33px;color:#000;left:1210.30px;letter-spacing:-0.491px;">MAJESTIC ATHLETIC...</span>
<span class="t" id="t148" style="top:424.62px;font-size:13.33px;color:#000;left:1354.30px;letter-spacing:-0.072px;">Mike Trout</span>
<span class="t" id="t149" style="top:446.62px;font-size:13.33px;color:#000;left:235.60px;letter-spacing:0.370px;">Cotton</span>
<span class="t" id="t150" style="top:446.62px;font-size:13.33px;color:#000;left:307.20px;letter-spacing:-0.262px;">Classic Full</span>
<span class="t" id="t151" style="top:446.62px;font-size:13.33px;color:#000;left:408.30px;letter-spacing:0.566px;">20 / 10 / 10</span>
<span class="t" id="t152" style="top:446.62px;font-size:13.33px;color:#000;left:525.30px;letter-spacing:0.401px;">3454333</span>
<span class="t" id="t153" style="top:446.62px;font-size:13.33px;color:#000;left:593.40px;letter-spacing:0.420px;">201010042</span>
<span class="t" id="t154" style="top:446.62px;font-size:13.33px;color:#000;left:676.40px;letter-spacing:-0.181px;">All Star Jersey</span>
<span class="t" id="t155" style="top:446.62px;font-size:13.33px;color:#000;left:852.40px;letter-spacing:0.336px;">48</span>
<span class="t" id="t156" style="top:446.62px;font-size:13.33px;color:#000;left:959.40px;letter-spacing:-0.318px;">Red</span>
<span class="t" id="t157" style="top:446.62px;font-size:13.33px;color:#000;right:444.60px;letter-spacing:0.159px;">$125.00</span>
<span class="t" id="t158" style="top:446.62px;font-size:13.33px;color:#000;right:395.40px;letter-spacing:0.186px;">63</span>
<span class="t" id="t159" style="top:446.62px;font-size:13.33px;color:#000;right:332.40px;letter-spacing:0.206px;">$50.00</span>
<span class="t" id="t160" style="top:446.62px;font-size:13.33px;color:#000;left:1210.30px;letter-spacing:-0.491px;">MAJESTIC ATHLETIC...</span>
<span class="t" id="t161" style="top:446.62px;font-size:13.33px;color:#000;left:1354.30px;letter-spacing:-0.072px;">Mike Trout</span>
<span class="t" id="t162" style="top:468.62px;font-size:13.33px;color:#000;left:235.60px;letter-spacing:0.370px;">Cotton</span>
<span class="t" id="t163" style="top:468.62px;font-size:13.33px;color:#000;left:307.20px;letter-spacing:-0.262px;">Classic Full</span>
<span class="t" id="t164" style="top:468.62px;font-size:13.33px;color:#000;left:408.30px;letter-spacing:0.566px;">20 / 10 / 10</span>
<span class="t" id="t165" style="top:468.62px;font-size:13.33px;color:#000;left:525.30px;letter-spacing:0.401px;">3454333</span>
<span class="t" id="t166" style="top:468.62px;font-size:13.33px;color:#000;left:593.40px;letter-spacing:0.420px;">201010030</span>
<span class="t" id="t167" style="top:468.62px;font-size:13.33px;color:#000;left:676.40px;letter-spacing:-0.181px;">All Star Jersey</span>
<span class="t" id="t168" style="top:468.62px;font-size:13.33px;color:#000;left:852.40px;letter-spacing:0.336px;">48</span>
<span class="t" id="t169" style="top:468.62px;font-size:13.33px;color:#000;left:959.40px;letter-spacing:0.384px;">White</span>
<span class="t" id="t170" style="top:468.62px;font-size:13.33px;color:#000;right:444.60px;letter-spacing:0.159px;">$125.00</span>
<span class="t" id="t171" style="top:468.62px;font-size:13.33px;color:#000;right:395.40px;letter-spacing:0.186px;">61</span>
<span class="t" id="t172" style="top:468.62px;font-size:13.33px;color:#000;right:332.40px;letter-spacing:0.206px;">$50.00</span>
<span class="t" id="t173" style="top:468.62px;font-size:13.33px;color:#000;left:1210.30px;letter-spacing:-0.491px;">MAJESTIC ATHLETIC...</span>
<span class="t" id="t174" style="top:468.62px;font-size:13.33px;color:#000;left:1354.30px;letter-spacing:-0.072px;">Mike Trout</span>
<span class="t" id="t175" style="top:490.62px;font-size:13.33px;color:#000;left:235.60px;letter-spacing:0.370px;">Cotton</span>
<span class="t" id="t176" style="top:490.62px;font-size:13.33px;color:#000;left:307.20px;letter-spacing:-0.262px;">Classic Full</span>
<span class="t" id="t177" style="top:490.62px;font-size:13.33px;color:#000;left:408.30px;letter-spacing:0.566px;">20 / 10 / 10</span>
<span class="t" id="t178" style="top:490.62px;font-size:13.33px;color:#000;left:525.30px;letter-spacing:0.401px;">3454333</span>
<span class="t" id="t179" style="top:490.62px;font-size:13.33px;color:#000;left:593.40px;letter-spacing:0.420px;">201010037</span>
<span class="t" id="t180" style="top:490.62px;font-size:13.33px;color:#000;left:676.40px;letter-spacing:-0.181px;">All Star Jersey</span>
<span class="t" id="t181" style="top:490.62px;font-size:13.33px;color:#000;left:852.40px;letter-spacing:0.336px;">52</span>
<span class="t" id="t182" style="top:490.62px;font-size:13.33px;color:#000;left:959.40px;letter-spacing:-0.156px;">Ash</span>
<span class="t" id="t183" style="top:490.62px;font-size:13.33px;color:#000;right:444.60px;letter-spacing:0.159px;">$125.00</span>
<span class="t" id="t184" style="top:490.62px;font-size:13.33px;color:#000;right:395.40px;letter-spacing:0.186px;">79</span>
<span class="t" id="t185" style="top:490.62px;font-size:13.33px;color:#000;right:332.40px;letter-spacing:0.206px;">$50.00</span>
<span class="t" id="t186" style="top:490.62px;font-size:13.33px;color:#000;left:1210.30px;letter-spacing:-0.491px;">MAJESTIC ATHLETIC...</span>
<span class="t" id="t187" style="top:490.62px;font-size:13.33px;color:#000;left:1354.30px;letter-spacing:-0.072px;">Mike Trout</span>
<span class="t" id="t188" style="top:512.62px;font-size:13.33px;color:#000;left:235.60px;letter-spacing:0.370px;">Cotton</span>
<span class="t" id="t189" style="top:512.62px;font-size:13.33px;color:#000;left:307.20px;letter-spacing:-0.262px;">Classic Full</span>
<span class="t" id="t190" style="top:512.62px;font-size:13.33px;color:#000;left:408.30px;letter-spacing:0.566px;">20 / 10 / 10</span>
<span class="t" id="t191" style="top:512.62px;font-size:13.33px;color:#000;left:525.30px;letter-spacing:0.401px;">3454333</span>
<span class="t" id="t192" style="top:512.62px;font-size:13.33px;color:#000;left:593.40px;letter-spacing:0.420px;">201010043</span>
<span class="t" id="t193" style="top:512.62px;font-size:13.33px;color:#000;left:676.40px;letter-spacing:-0.181px;">All Star Jersey</span>
<span class="t" id="t194" style="top:512.62px;font-size:13.33px;color:#000;left:852.40px;letter-spacing:0.336px;">52</span>
<span class="t" id="t195" style="top:512.62px;font-size:13.33px;color:#000;left:959.40px;letter-spacing:-0.318px;">Red</span>
<span class="t" id="t196" style="top:512.62px;font-size:13.33px;color:#000;right:444.60px;letter-spacing:0.159px;">$125.00</span>
<span class="t" id="t197" style="top:512.62px;font-size:13.33px;color:#000;right:395.40px;letter-spacing:0.186px;">63</span>
<span class="t" id="t198" style="top:512.62px;font-size:13.33px;color:#000;right:332.40px;letter-spacing:0.206px;">$50.00</span>
<span class="t" id="t199" style="top:512.62px;font-size:13.33px;color:#000;left:1210.30px;letter-spacing:-0.491px;">MAJESTIC ATHLETIC...</span>
<span class="t" id="t200" style="top:512.62px;font-size:13.33px;color:#000;left:1354.30px;letter-spacing:-0.072px;">Mike Trout</span>
<span class="t" id="t201" style="top:534.62px;font-size:13.33px;color:#000;left:235.60px;letter-spacing:0.370px;">Cotton</span>
<span class="t" id="t202" style="top:534.62px;font-size:13.33px;color:#000;left:307.20px;letter-spacing:-0.262px;">Classic Full</span>
<span class="t" id="t203" style="top:534.62px;font-size:13.33px;color:#000;left:408.30px;letter-spacing:0.566px;">20 / 10 / 10</span>
<span class="t" id="t204" style="top:534.62px;font-size:13.33px;color:#000;left:525.30px;letter-spacing:0.401px;">3454333</span>
<span class="t" id="t205" style="top:534.62px;font-size:13.33px;color:#000;left:593.40px;letter-spacing:0.420px;">201010031</span>
<span class="t" id="t206" style="top:534.62px;font-size:13.33px;color:#000;left:676.40px;letter-spacing:-0.181px;">All Star Jersey</span>
<span class="t" id="t207" style="top:534.62px;font-size:13.33px;color:#000;left:852.40px;letter-spacing:0.336px;">52</span>
<span class="t" id="t208" style="top:534.62px;font-size:13.33px;color:#000;left:959.40px;letter-spacing:0.384px;">White</span>
<span class="t" id="t209" style="top:534.62px;font-size:13.33px;color:#000;right:444.60px;letter-spacing:0.159px;">$125.00</span>
<span class="t" id="t210" style="top:534.62px;font-size:13.33px;color:#000;right:395.40px;letter-spacing:0.186px;">60</span>
<span class="t" id="t211" style="top:534.62px;font-size:13.33px;color:#000;right:332.40px;letter-spacing:0.206px;">$50.00</span>
<span class="t" id="t212" style="top:534.62px;font-size:13.33px;color:#000;left:1210.30px;letter-spacing:-0.491px;">MAJESTIC ATHLETIC...</span>
<span class="t" id="t213" style="top:534.62px;font-size:13.33px;color:#000;left:1354.30px;letter-spacing:-0.072px;">Mike Trout</span>
<span class="t" id="t214" style="top:556.62px;font-size:13.33px;color:#000;left:235.60px;letter-spacing:0.370px;">Cotton</span>
<span class="t" id="t215" style="top:556.62px;font-size:13.33px;color:#000;left:307.20px;letter-spacing:-0.262px;">Classic Full</span>
<span class="t" id="t216" style="top:556.62px;font-size:13.33px;color:#000;left:408.30px;letter-spacing:0.566px;">20 / 10 / 10</span>
<span class="t" id="t217" style="top:556.62px;font-size:13.33px;color:#000;left:525.30px;letter-spacing:0.401px;">3454333</span>
<span class="t" id="t218" style="top:556.62px;font-size:13.33px;color:#000;left:593.40px;letter-spacing:0.420px;">201010038</span>
<span class="t" id="t219" style="top:556.62px;font-size:13.33px;color:#000;left:676.40px;letter-spacing:-0.181px;">All Star Jersey</span>
<span class="t" id="t220" style="top:556.62px;font-size:13.33px;color:#000;left:852.40px;letter-spacing:0.336px;">56</span>
<span class="t" id="t221" style="top:556.62px;font-size:13.33px;color:#000;left:959.40px;letter-spacing:-0.156px;">Ash</span>
<span class="t" id="t222" style="top:556.62px;font-size:13.33px;color:#000;right:444.60px;letter-spacing:0.159px;">$125.00</span>
<span class="t" id="t223" style="top:556.62px;font-size:13.33px;color:#000;right:395.40px;letter-spacing:0.186px;">80</span>
<span class="t" id="t224" style="top:556.62px;font-size:13.33px;color:#000;right:332.40px;letter-spacing:0.206px;">$50.00</span>
<span class="t" id="t225" style="top:556.62px;font-size:13.33px;color:#000;left:1210.30px;letter-spacing:-0.491px;">MAJESTIC ATHLETIC...</span>
<span class="t" id="t226" style="top:556.62px;font-size:13.33px;color:#000;left:1354.30px;letter-spacing:-0.072px;">Mike Trout</span>
<span class="t" id="t227" style="top:578.62px;font-size:13.33px;color:#000;left:235.60px;letter-spacing:0.370px;">Cotton</span>
<span class="t" id="t228" style="top:578.62px;font-size:13.33px;color:#000;left:307.20px;letter-spacing:-0.262px;">Classic Full</span>
<span class="t" id="t229" style="top:578.62px;font-size:13.33px;color:#000;left:408.30px;letter-spacing:0.566px;">20 / 10 / 10</span>
<span class="t" id="t230" style="top:578.62px;font-size:13.33px;color:#000;left:525.30px;letter-spacing:0.401px;">3454333</span>
<span class="t" id="t231" style="top:578.62px;font-size:13.33px;color:#000;left:593.40px;letter-spacing:0.420px;">201010044</span>
<span class="t" id="t232" style="top:578.62px;font-size:13.33px;color:#000;left:676.40px;letter-spacing:-0.181px;">All Star Jersey</span>
<span class="t" id="t233" style="top:578.62px;font-size:13.33px;color:#000;left:852.40px;letter-spacing:0.336px;">56</span>
<span class="t" id="t234" style="top:578.62px;font-size:13.33px;color:#000;left:959.40px;letter-spacing:-0.318px;">Red</span>
<span class="t" id="t235" style="top:578.62px;font-size:13.33px;color:#000;right:444.60px;letter-spacing:0.159px;">$125.00</span>
<span class="t" id="t236" style="top:578.62px;font-size:13.33px;color:#000;right:395.40px;letter-spacing:0.186px;">63</span>
<span class="t" id="t237" style="top:578.62px;font-size:13.33px;color:#000;right:332.40px;letter-spacing:0.206px;">$50.00</span>
<span class="t" id="t238" style="top:578.62px;font-size:13.33px;color:#000;left:1210.30px;letter-spacing:-0.491px;">MAJESTIC ATHLETIC...</span>
<span class="t" id="t239" style="top:578.62px;font-size:13.33px;color:#000;left:1354.30px;letter-spacing:-0.072px;">Mike Trout</span>
</div></div>
<div class="b" style="left:1398px;top:249px;width:17px;height:346px;background:#f0f0f0;"></div>
<div class="b" style="left:1398px;top:249px;width:1px;height:348px;background:#fff;"></div>
<div class="b" style="left:1399px;top:266px;width:15px;height:31px;background:#cdcdcd;"></div>
<svg class="b" style="left:1398px;top:249px" width="17" height="17" viewBox="0 0 17 17"><path d="M5.200 10.900l3.300-3.300 3.300 3.300" fill="none" stroke="#5c5c5c" stroke-width="2.100"/></svg>
<svg class="b" style="left:1398px;top:579px" width="17" height="17" viewBox="0 0 17 17"><path d="M5.200 7l3.300 3.300 3.300-3.300" fill="none" stroke="#5c5c5c" stroke-width="2.100"/></svg>
<div class="b" style="left:230px;top:597px;width:1168px;height:15px;background:#f0f0f0;"></div>
<div class="b" style="left:247px;top:597px;width:830px;height:15px;background:#cdcdcd;"></div>
<svg class="b" style="left:229px;top:596px" width="17" height="17" viewBox="0 0 17 17"><path d="M11.200 5.300l-3.400 3.200 3.400 3.200" fill="none" stroke="#5c5c5c" stroke-width="2.100"/></svg>
<svg class="b" style="left:1381px;top:596px" width="17" height="17" viewBox="0 0 17 17"><path d="M7.300 5.300l3.400 3.200-3.400 3.200" fill="none" stroke="#5c5c5c" stroke-width="2.100"/></svg>
<div class="b" style="left:1423px;top:249px;width:78px;height:42px;background:#f0f0f0;border:1px solid #adadad;"></div>
<span class="t" id="t240" style="top:256.02px;font-size:13.33px;color:#000;left:1443.50px;letter-spacing:-0.169px;">Create</span>
<span class="t" id="t241" style="top:274.02px;font-size:13.33px;color:#000;left:1435.50px;letter-spacing:-0.162px;">New Item</span>
<div class="b" style="left:1423px;top:301px;width:78px;height:30px;background:#f0f0f0;border:1px solid #adadad;"></div>
<span class="t" id="t242" style="top:310.02px;font-size:13.33px;color:#000;left:1437.50px;letter-spacing:-0.177px;">Edit Item</span>
<div class="b" style="left:1423px;top:341px;width:78px;height:42px;background:#f0f0f0;border:1px solid #adadad;"></div>
<span class="t" id="t243" style="top:348.02px;font-size:13.33px;color:#000;left:1439.50px;letter-spacing:-0.440px;">Remove</span>
<span class="t" id="t244" style="top:366.02px;font-size:13.33px;color:#000;left:1450.00px;letter-spacing:0.020px;">Item</span>
<div class="b" style="left:1423px;top:393px;width:78px;height:42px;background:#f0f0f0;border:1px solid #adadad;"></div>
<span class="t" id="t245" style="top:400.02px;font-size:13.33px;color:#000;left:1449.50px;letter-spacing:-0.081px;">Print</span>
<span class="t" id="t246" style="top:418.02px;font-size:13.33px;color:#000;left:1444.50px;letter-spacing:-0.380px;">Labels</span>
<div class="b" style="left:1423px;top:445px;width:78px;height:58px;background:#f0f0f0;border:1px solid #adadad;"></div>
<span class="t" id="t247" style="top:451.02px;font-size:13.33px;color:#000;left:1434.50px;letter-spacing:-0.170px;">Adjust On</span>
<span class="t" id="t248" style="top:468.72px;font-size:13.33px;color:#000;left:1448.00px;letter-spacing:-0.469px;">Hand</span>
<span class="t" id="t249" style="top:486.02px;font-size:13.33px;color:#000;left:1438.50px;letter-spacing:-0.080px;">Quantity</span>
<div class="b" style="left:1423px;top:513px;width:78px;height:62px;background:#f0f0f0;border:1px solid #adadad;"></div>
<span class="t" id="t250" style="top:520.40px;font-size:9.8px;color:#000;left:1438.75px;letter-spacing:-0.161px;">Create new</span>
<span class="t" id="t251" style="top:534.40px;font-size:9.8px;color:#000;left:1431.75px;letter-spacing:0.031px;">Item based on</span>
<span class="t" id="t252" style="top:548.40px;font-size:9.8px;color:#000;left:1434.00px;letter-spacing:-0.316px;">201010034 All</span>
<span class="t" id="t253" style="top:561.50px;font-size:9.8px;color:#000;left:1439.75px;letter-spacing:-0.277px;">Star Jersey</span>
<div class="b" style="left:1420px;top:585px;width:90px;height:28px;overflow:hidden"><div class="b" style="left:-1420px;top:-585px;width:1532px;height:646px">
<div class="b" style="left:1423px;top:585px;width:78px;height:42px;background:#f0f0f0;border:1px solid #adadad;"></div>
<span class="t" id="t254" style="top:590.52px;font-size:13.33px;color:#000;left:1450.00px;letter-spacing:0.020px;">Item</span>
<span class="t" id="t255" style="top:608.52px;font-size:13.33px;color:#000;left:1442.00px;letter-spacing:0.076px;">History</span>
</div></div>
<div class="b" style="left:1511px;top:57px;width:19px;height:564px;background:#d3deff;"></div>
<svg class="b" style="left:1511px;top:58px" width="19" height="19" viewBox="0 0 19 19"><circle cx="9.300" cy="9" r="9" fill="#0b2f6b"/><text x="9.300" y="14.200" font-family="Liberation Sans,sans-serif" font-weight="bold" font-size="14.500" fill="#fff" text-anchor="middle">?</text></svg>
<span class="t" id="tv" style="left:1514.800px;top:79.500px;font-size:13.33px;color:#14245c;transform-origin:0 0;transform:rotate(90deg) translate(0,-100%);letter-spacing:0.009px">Click here for on-form help.</span>
<div class="b" style="left:2px;top:620px;width:1509px;height:23px;background:#f0f0f0;"></div>
<div class="b" style="left:1511px;top:621px;width:19px;height:22px;background:#f0f0f0;"></div>
<div class="b" style="left:2px;top:620px;width:220px;height:1px;background:#9a9ea4;"></div>
<div class="b" style="left:2px;top:642px;width:1528px;height:1px;background:#ebe6e1;"></div>
<div class="b" style="left:2px;top:621px;width:727px;height:1px;background:#a0a0a0;"></div>
<div class="b" style="left:159px;top:621px;width:1px;height:22px;background:#a0a0a0;"></div>
<div class="b" style="left:448px;top:621px;width:1px;height:22px;background:#a0a0a0;"></div>
<div class="b" style="left:497px;top:621px;width:1px;height:22px;background:#a0a0a0;"></div>
<div class="b" style="left:728px;top:621px;width:1px;height:22px;background:#a0a0a0;"></div>
<svg class="b" style="left:5px;top:623px" width="18" height="19" viewBox="0 0 18 19"><circle cx="9" cy="5" r="4.700" fill="#222"/><path d="M.8 18.500v-4.200C.8 11 3.400 9.600 5.400 9.300c1 .9 2.200 1.400 3.600 1.400s2.600-.5 3.600-1.400c2 .3 4.600 1.700 4.600 5v4.200z" fill="#222"/></svg>
<span class="t" id="t257" style="top:625.22px;font-size:13.33px;color:#000;left:26.10px;letter-spacing:-0.396px;">99 Everything, Evelyn</span>
<svg class="b" style="left:161px;top:622px" width="19" height="20" viewBox="0 0 19 20"><rect x="0.200" y="0.700" width="18.600" height="19.200" rx="1.800" fill="#222"/><rect x="2" y="2.400" width="15" height="3.400" fill="#f4f4f4"/><g fill="#f4f4f4"><circle cx="3.1" cy="9.1" r="1.350"/><circle cx="7.2" cy="9.1" r="1.350"/><circle cx="11.5" cy="9.1" r="1.350"/><circle cx="3.1" cy="13.3" r="1.350"/><circle cx="7.2" cy="13.3" r="1.350"/><circle cx="11.5" cy="13.3" r="1.350"/><circle cx="3.1" cy="17.5" r="1.350"/><circle cx="7.2" cy="17.5" r="1.350"/><circle cx="11.5" cy="17.5" r="1.350"/><circle cx="15.9" cy="9.1" r="1.350"/><rect x="14.600" y="11.950" width="2.600" height="6.900" rx="1.300"/></g></svg>
<span class="t" id="t258" style="top:625.22px;font-size:13.33px;color:#000;left:183.50px;letter-spacing:-0.062px;">weighted average cost calculated per store</span>
<span class="t" id="t259" style="top:625.22px;font-size:13.33px;color:#000;left:458.30px;letter-spacing:-0.823px;">100%</span>
<span class="t" id="t260" style="top:625.22px;font-size:13.33px;color:#000;left:507.20px;letter-spacing:-0.170px;">YellowDogInventory Stadium Demo</span>
<div class="b" style="left:875px;top:621px;width:159px;height:21px;border:1px solid #a0a0a0;border-bottom:0;"></div>
<span class="t" id="t261" style="top:625.22px;font-size:13.33px;color:#a3a3a3;left:884.90px;letter-spacing:-0.088px;">ydsdemo.ydihosting.net</span>
<svg class="b" style="left:1038px;top:621px" width="21" height="22" viewBox="0 0 21 22"><path d="M4.400 12V7.900a6 6 0 0 1 12 0V12" fill="none" stroke="#258c28" stroke-width="3.100"/><rect x="0.800" y="11.300" width="19.400" height="11" rx="0.800" fill="#258c28"/></svg>
<div class="b" style="left:1060px;top:621px;width:134px;height:21px;border:1px solid #a0a0a0;border-bottom:0;"></div>
<span class="t" id="t262" style="top:625.22px;font-size:13.33px;color:#a3a3a3;left:1070.20px;letter-spacing:-0.603px;">YDIDemos_Stadium</span>
<div class="b" style="left:1195px;top:621px;width:70px;height:21px;border:1px solid #a0a0a0;border-bottom:0;"></div>
<span class="t" id="t263" style="top:625.22px;font-size:13.33px;color:#a3a3a3;left:1205.30px;letter-spacing:-0.398px;">Build 363</span>
<div class="b" style="left:1303px;top:621px;width:225px;height:21px;border:1px solid #a0a0a0;border-bottom:0;"></div>
<span class="t" id="t264" style="top:625.22px;font-size:13.33px;color:#000;left:1317.00px;letter-spacing:-0.236px;">Thursday, March 01, 2018 8:31 PM</span>
</body></html>
